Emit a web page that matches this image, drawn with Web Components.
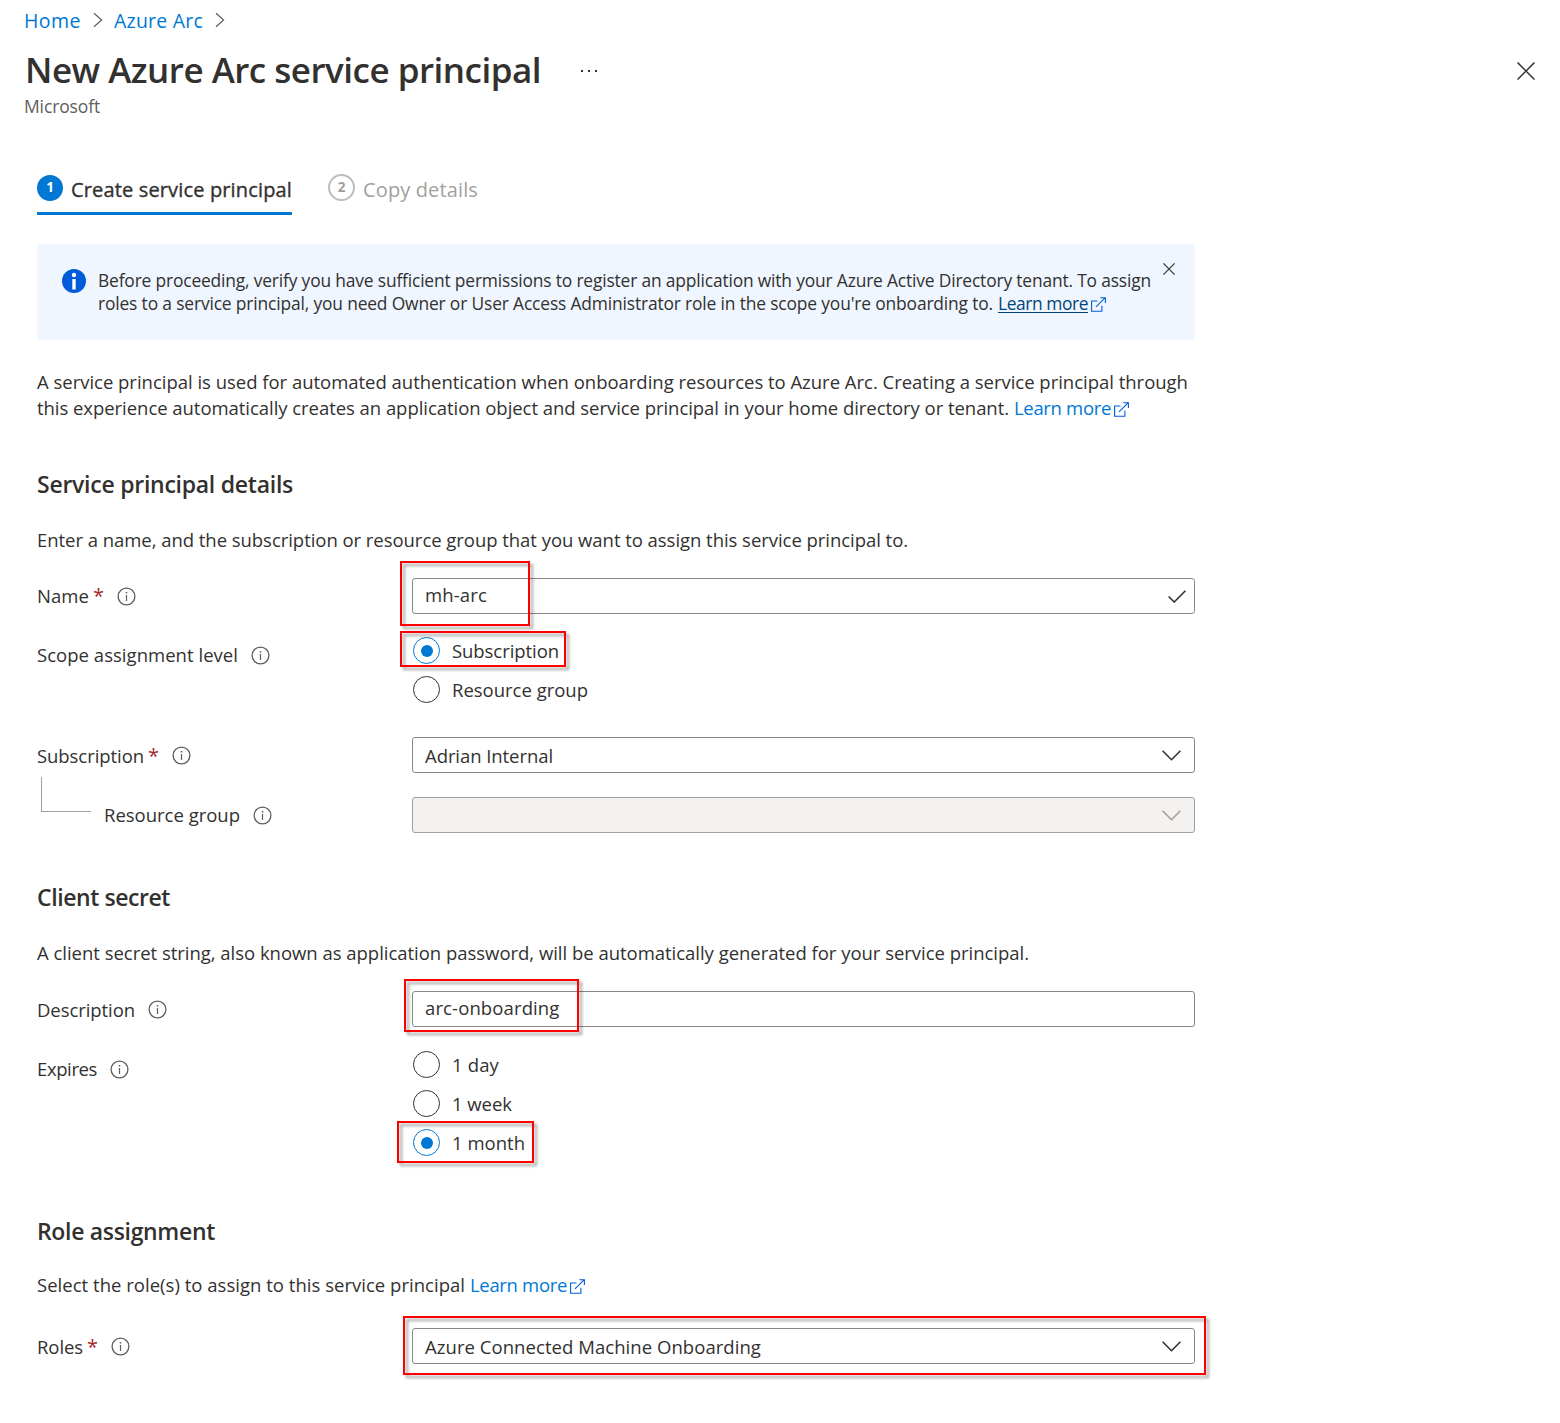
<!DOCTYPE html>
<html lang="en">
<head>
<meta charset="utf-8">
<title>New Azure Arc service principal</title>
<style>
body{margin:0;background:#fff;color:#323130;font-family:"Open Sans","Noto Sans",sans-serif;font-size:18.5px}
</style>
</head>
<body>
<arc-page></arc-page>
<script>
const define = (name, html, setup) => customElements.define(name, class extends HTMLElement {
  connectedCallback() {
    if (this.shadowRoot) return;
    const root = this.attachShadow({mode: 'open'});
    const t = document.createElement('template');
    t.innerHTML = typeof html === 'function' ? html(this) : html;
    root.appendChild(t.content.cloneNode(true));
    if (setup) setup(this, root);
  }
});

// One line of text whose tracking is adjusted to a set measure.
define('fit-text', '<style>:host{display:inline-block;white-space:nowrap;flex:none}</style><slot></slot>', el => {
  const w = +el.getAttribute('w'), n = el.textContent.length;
  const natural = el.getBoundingClientRect().width;
  el.style.letterSpacing = ((w - natural) / n).toFixed(3) + 'px';
  el.style.width = w + 'px';
});

const icons = {
  chevronRight: [10, 16, '<path d="M1 1.2 8.6 8 1 14.8" stroke-width="1.2"/>'],
  close: [18, 18, '<path d="M.5.5l17 17M17.500.5l-17 17" stroke-width="1.5"/>'],
  closeSmall: [12, 12, '<path d="M.4.4l11.200 11.200M11.600.4.4 11.600" stroke-width="1.200"/>'],
  down: [19, 11, '<path d="M.6.700 9.500 9.700 18.400.700" stroke-width="1.600"/>'],
  check: [18, 13, '<path d="M.6 6.500 6.200 12 17.400.700" stroke-width="1.600"/>'],
  info: [19, 19, '<circle cx="9.500" cy="9.500" r="8.400" stroke-width="1.300"/><path d="M9.500 8v6" stroke-width="1.200"/><path d="M9.500 5v1.500" stroke-width="1.500"/>'],
  external: [15, 15, '<path d="M6.500 4H.6v10.300h10.300V8.800M5 9.900 14 .9M9.300.7h5.100v5.200" stroke-width="1.100"/>'],
  more: [17, 4, '<g fill="currentColor" stroke="none"><rect x="0" y="1" width="2" height="2"/><rect x="7" y="1" width="2" height="2"/><rect x="14" y="1" width="2" height="2"/></g>']
};
define('ui-icon', el => {
  const [w, h, d] = icons[el.getAttribute('name')];
  return `<style>:host{display:inline-block;flex:none;width:${w}px;height:${h}px}svg{display:block}</style>
  <svg width="${w}" height="${h}" viewBox="0 0 ${w} ${h}" fill="none" stroke="currentColor">${d}</svg>`;
});

define('learn-more', el => `<style>
:host{display:flex;align-items:center;color:#0078d4;margin-left:5px}
:host([underlined]){color:#004578}
:host([underlined]) a{border-bottom:1px solid #004578;line-height:18px;height:18px;display:block;margin-top:1px}
ui-icon{color:#015cda;margin:4px 0 0 3px}
</style><a><fit-text w="${el.getAttribute('w')}">Learn more</fit-text></a><ui-icon name="external"></ui-icon>`);

define('page-header', `<style>
:host{display:flex;flex-direction:column;padding:6px 25px 0 24px}
nav{display:flex;align-items:center;height:28px;font-size:19.500px;color:#0078d4}
nav ui-icon{color:#605e5c;margin:0 11px 0 12px}
.title{display:flex;align-items:center;height:48px;margin-top:12px}
h1{font-size:35px;font-weight:600;margin:0 0 0 1px;line-height:48px;flex:none}
.title ui-icon:last-child{margin-left:auto;margin-top:2px}
.more{margin-left:40px;margin-top:2px}
.sub{font-size:17.500px;color:#605e5c;line-height:24px}
</style>
<nav><fit-text w="57">Home</fit-text><ui-icon name="chevronRight"></ui-icon><fit-text w="89">Azure Arc</fit-text><ui-icon name="chevronRight"></ui-icon></nav>
<div class="title"><h1><fit-text w="516">New Azure Arc service principal</fit-text></h1><ui-icon class="more" name="more"></ui-icon><ui-icon name="close"></ui-icon></div>
<div class="sub"><fit-text w="76">Microsoft</fit-text></div>`);

define('step-tab', el => `<style>
:host{display:flex;box-sizing:border-box;height:55px;align-items:flex-start;padding-top:14px;color:#a19f9d;font-size:20px;margin-right:36px;border-bottom:3px solid transparent}
:host([active]){color:#323130;border-color:#0078d4}
:host([active]) span{-webkit-text-stroke:.35px #323130}
b{box-sizing:border-box;width:27px;height:27px;border-radius:50%;border:2px solid #bebbb8;display:flex;align-items:center;justify-content:center;font-size:13.500px;line-height:1;font-weight:700;margin-right:8px}
:host([active]) b{width:26px;height:26px;background:#0078d4;border-color:#0078d4;color:#fff;margin:1px 8px 0 0}
span{line-height:30px;margin-top:1px}
</style><b>${el.getAttribute('n')}</b><span><fit-text w="${el.getAttribute('w')}">${el.getAttribute('label')}</fit-text></span>`);

define('info-banner', `<style>
:host{display:flex;box-sizing:border-box;width:1158px;height:96px;margin-top:29px;background:#f0f6ff;border-radius:3px;padding:25px 20px 0 25px;font-size:17.400px}
.badge{flex:none;width:24px;height:24px}
.body{margin:-1px 0 0 12px;width:1054px}
.line{display:flex;align-items:center;height:23px}
.close{margin-left:auto;margin-top:-6px}
</style>
<svg class="badge" viewBox="0 0 24 24"><circle cx="12" cy="12" r="12" fill="#015cda"/><circle cx="12" cy="6" r="2.200" fill="#fff"/><path d="M10.300 10h3.400v10.500h-3.400z" fill="#fff"/></svg>
<div class="body"><div class="line"><fit-text w="1053">Before proceeding, verify you have sufficient permissions to register an application with your Azure Active Directory tenant. To assign</fit-text></div>
<div class="line"><fit-text w="895">roles to a service principal, you need Owner or User Access Administrator role in the scope you're onboarding to.</fit-text><learn-more underlined w="90"></learn-more></div></div>
<ui-icon class="close" name="closeSmall"></ui-icon>`);

define('section-title', el => `<style>:host{display:block;height:32px;line-height:32px;font-size:23px;font-weight:600}</style><fit-text w="${el.getAttribute('w')}">${el.getAttribute('label')}</fit-text>`);

define('text-line', '<style>:host{box-sizing:border-box;display:flex;align-items:center;height:26px;padding-bottom:2px}</style><slot></slot>');

define('form-row', el => `<style>
:host{display:flex;align-items:flex-start;width:1158px}
.label{box-sizing:border-box;display:flex;align-items:center;height:36px;width:375px;flex:none}
:host([tall]) .label{height:48px}
:host([raised]) .label fit-text,:host([raised]) i{margin-top:-2px}
:host([nested]) .label{padding-left:67px;position:relative}
:host([nested]) .label::before{content:"";position:absolute;left:4px;top:-20px;width:49px;height:34px;border:solid #a19f9d;border-width:0 0 1px 1px}
i{font-style:normal;color:#a4262c;margin-left:4px;width:9px;font-size:20px}
ui-icon{color:#605e5c;margin-left:${el.hasAttribute('required') ? 15 : 13}px}
.field{flex:1}
</style><div class="label"><fit-text w="${el.getAttribute('w')}">${el.getAttribute('label')}</fit-text>${el.hasAttribute('required') ? '<i>*</i>' : ''}<ui-icon name="info"></ui-icon></div><div class="field"><slot></slot></div>`);

define('field-box', el => `<style>
:host{display:flex;box-sizing:border-box;width:783px;height:36px;border:1px solid #8a8886;border-radius:3px;align-items:center;padding:0 13px 0 12px;background:#fff}
:host([disabled]){background:#f3f2f1;color:#a19f9d;border-color:#a19f9d}
:host([icon=check]){padding-right:8px}
ui-icon{margin-left:auto}
:host([raised]) ::slotted(fit-text){margin-top:-3px}
</style><slot></slot>${el.hasAttribute('icon') ? `<ui-icon name="${el.getAttribute('icon')}"></ui-icon>` : ''}`);

define('radio-option', `<style>
:host{display:flex;align-items:center;height:39px;margin-left:1px}
.dot{box-sizing:border-box;width:27px;height:27px;border:1px solid #323130;border-radius:50%;margin-right:12px;display:flex;align-items:center;justify-content:center}
:host([checked]) .dot{border-color:#0078d4}
:host([checked]) .dot::after{content:"";width:12px;height:12px;border-radius:50%;background:#0078d4}
</style><span class="dot"></span><slot></slot>`);

// Highlight rectangle drawn over the form; box="left top width height".
define('call-out', el => {
  const [x, y, w, h] = el.getAttribute('box').split(' ');
  return `<style>:host{position:absolute;box-sizing:border-box;left:${x}px;top:${y}px;width:${w}px;height:${h}px;border:2px solid #f00;filter:drop-shadow(3px 3px 1.500px rgba(0,0,0,.38));pointer-events:none}</style>`;
});

define('arc-page', `<style>
:host{display:block;position:relative;width:1560px;height:1423px;overflow:hidden}
main{display:flex;flex-direction:column;padding-left:37px;margin-top:42px}
.tabs{display:flex}
.para{margin-top:29px}
.s1{margin-top:47px}.s2{margin-top:48px}.s3{margin-top:53px}
</style>
<page-header></page-header>
<main>
<div class="tabs"><step-tab active n="1" label="Create service principal" w="221"></step-tab><step-tab n="2" label="Copy details" w="115"></step-tab></div>
<info-banner></info-banner>
<div class="para">
<text-line><fit-text w="1151">A service principal is used for automated authentication when onboarding resources to Azure Arc. Creating a service principal through</fit-text></text-line>
<text-line><fit-text w="972">this experience automatically creates an application object and service principal in your home directory or tenant.</fit-text><learn-more w="97"></learn-more></text-line>
</div>
<section-title class="s1" label="Service principal details" w="256"></section-title>
<text-line style="margin-top:27px"><fit-text w="871">Enter a name, and the subscription or resource group that you want to assign this service principal to.</fit-text></text-line>
<form-row style="margin-top:25px" label="Name" w="52" required raised><field-box icon="check" raised><fit-text w="62">mh-arc</fit-text></field-box></form-row>
<form-row style="margin-top:17px" tall raised label="Scope assignment level" w="201"><radio-option checked><fit-text w="107">Subscription</fit-text></radio-option><radio-option><fit-text w="136">Resource group</fit-text></radio-option></form-row>
<form-row style="margin-top:28px" label="Subscription" w="107" required><field-box icon="down"><fit-text w="128">Adrian Internal</fit-text></field-box></form-row>
<form-row style="margin-top:24px" nested raised label="Resource group" w="136"><field-box disabled icon="down"></field-box></form-row>
<section-title class="s2" label="Client secret" w="133"></section-title>
<text-line style="margin-top:27px"><fit-text w="992">A client secret string, also known as application password, will be automatically generated for your service principal.</fit-text></text-line>
<form-row style="margin-top:25px" label="Description" w="98"><field-box raised><fit-text w="134.500">arc-onboarding</fit-text></field-box></form-row>
<form-row style="margin-top:18px" tall raised label="Expires" w="60"><radio-option><fit-text w="47">1 day</fit-text></radio-option><radio-option><fit-text w="60">1 week</fit-text></radio-option><radio-option checked><fit-text w="73">1 month</fit-text></radio-option></form-row>
<section-title class="s3" label="Role assignment" w="178"></section-title>
<text-line style="margin-top:25px"><fit-text w="428">Select the role(s) to assign to this service principal</fit-text><learn-more w="97"></learn-more></text-line>
<form-row style="margin-top:30px" label="Roles" w="46" required><field-box icon="down"><fit-text w="336">Azure Connected Machine Onboarding</fit-text></field-box></form-row>
</main>
<call-out box="400 561 130 65"></call-out>
<call-out box="400 631 166 36"></call-out>
<call-out box="404 979 175 53"></call-out>
<call-out box="397 1121 137 42"></call-out>
<call-out box="403 1316 803 59"></call-out>`);
</script>
</body>
</html>
